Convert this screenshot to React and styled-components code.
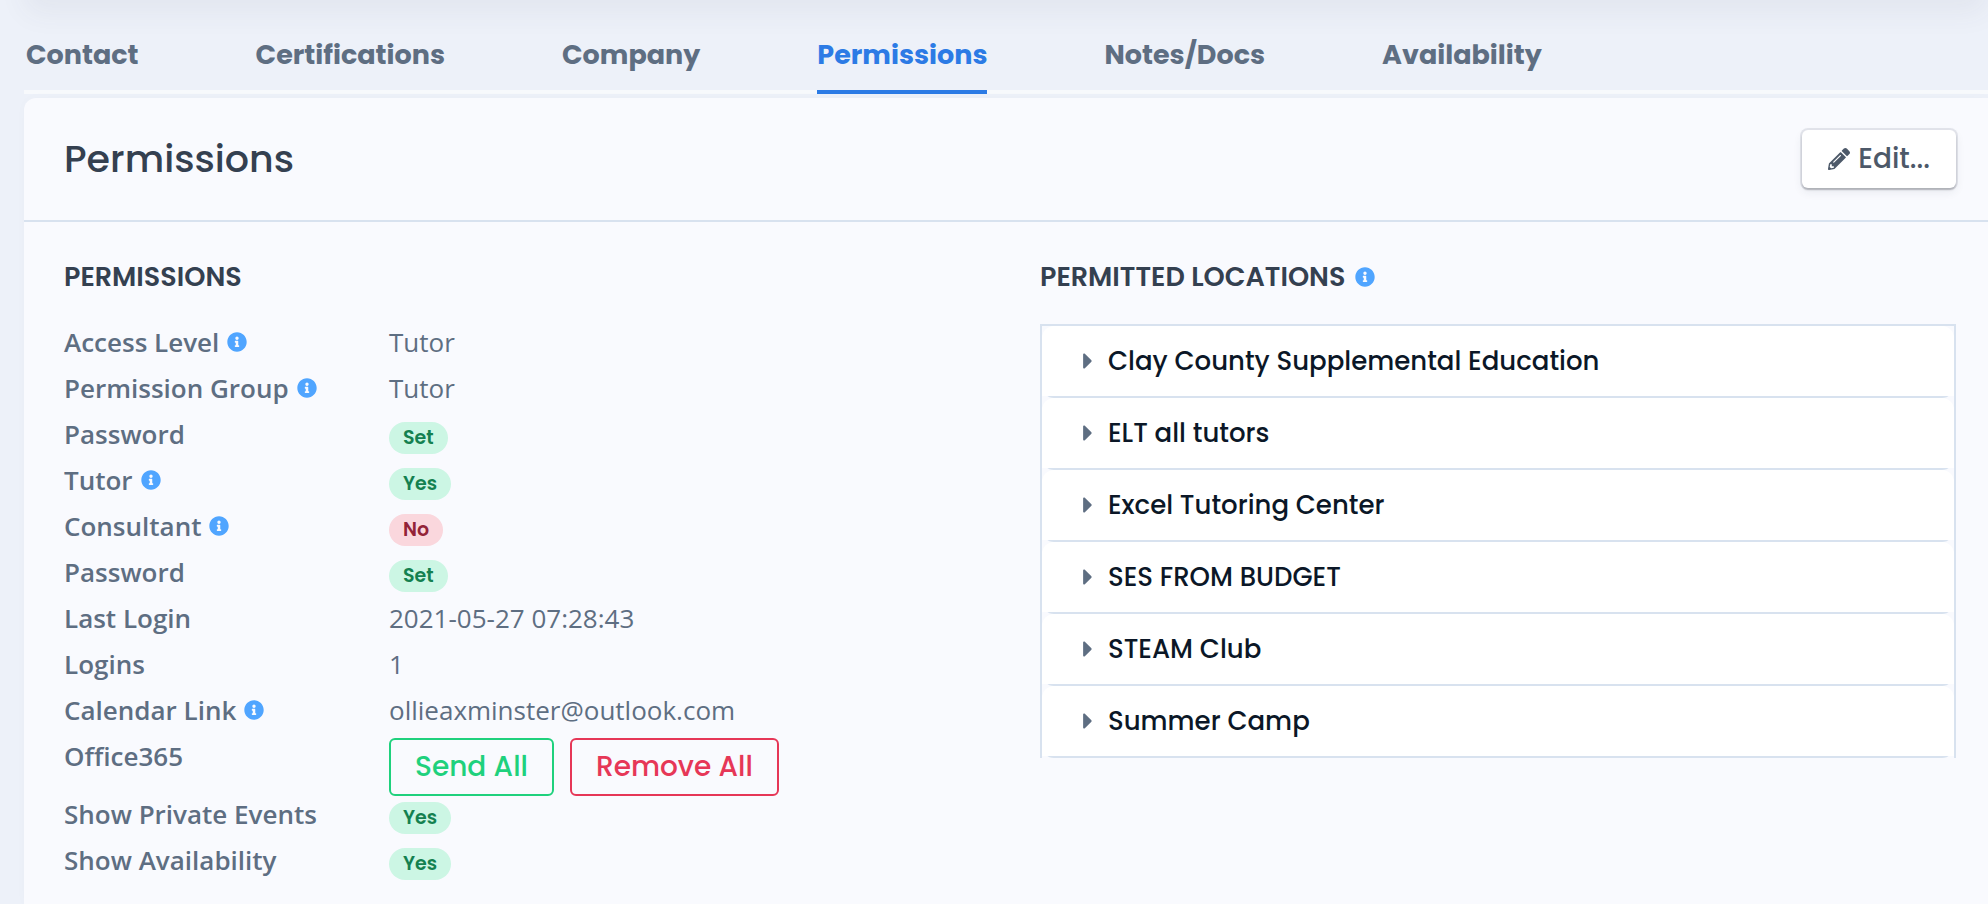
import React,{useState} from 'react'
import styled,{createGlobalStyle} from 'styled-components'
import {FaInfoCircle,FaCaretRight,FaPencilAlt} from 'react-icons/fa'

const GlobalStyle = createGlobalStyle`
  * { box-sizing: border-box; }
  body {
    margin: 0;
    background: #edf1f9;
    color: #5e6e82;
    font-family: "Open Sans", sans-serif;
    font-size: 26px;
    line-height: 36px;
    overflow: hidden;
  }
`

const heading = 'Poppins, Inter, sans-serif'

const Page = styled.div`
  min-height: 100vh;
  padding-left: 24px;
  display: flex;
  flex-direction: column;
`

// bottom edge of the profile card that sits above the tabs
const CardAbove = styled.div`
  height: 60px;
  margin-top: -60px;
  border-radius: 12px;
  box-shadow: 0 14px 28px rgba(65, 69, 88, 0.06);
`

const Tabs = styled.nav`
  display: flex;
  gap: 117px;
  height: 94px;
  padding-left: 2px;
  border-bottom: 4px solid #f7f9fc;
`

const Tab = styled.a`
  height: 94px;
  padding-top: 37px;
  border-bottom: 4px solid ${props => props.$active ? '#2c7be5' : 'transparent'};
  color: ${props => props.$active ? '#2c7be5' : '#5e6e82'};
  font-family: ${heading};
  font-size: 27px;
  font-weight: 700;
  text-decoration: none;
  white-space: nowrap;
`

const Card = styled.section`
  flex: 1;
  margin-top: 4px;
  background: #f9fafe;
  border-radius: 12px 0 0 0;
  box-shadow: 0 0 12px rgba(0, 30, 20, 0.02);
`

const CardHeader = styled.header`
  display: flex;
  align-items: center;
  justify-content: space-between;
  height: 124px;
  padding: 0 32px 0 40px;
  border-bottom: 2px solid #d8e2ef;
`

const Title = styled.h1`
  margin: 0;
  color: #344050;
  font-family: ${heading};
  font-size: 38px;
  line-height: 48px;
  font-weight: 500;
`

const EditButton = styled.button`
  display: flex;
  align-items: center;
  gap: 8px;
  height: 58px;
  padding: 0 26px;
  border: 0;
  border-radius: 6px;
  background: #fff;
  color: #4d5969;
  font-family: ${heading};
  font-size: 28px;
  font-weight: 500;
  cursor: pointer;
  box-shadow: 0 0 0 2px rgba(43, 45, 80, 0.1), 0 4px 10px rgba(43, 45, 80, 0.08), 0 2px 2px rgba(0, 0, 0, 0.2);

  svg {
    font-size: 22px;
  }
`

const CardBody = styled.div`
  display: grid;
  grid-template-columns: 1fr 1fr;
  column-gap: 60px;
  padding: 37px 32px 0 40px;
`

const Subtitle = styled.h2`
  display: flex;
  align-items: center;
  gap: 10px;
  margin: 0 0 29px;
  color: #344050;
  font-family: ${heading};
  font-size: 27px;
  line-height: 36px;
  font-weight: 600;
  text-transform: uppercase;
`

const InfoIcon = styled(FaInfoCircle)`
  color: #50a5ff;
  font-size: 20px;
  flex: none;
`

const Fields = styled.dl`
  margin: 0;
`

const Field = styled.div`
  display: grid;
  grid-template-columns: 325px 1fr;
  min-height: 46px;
`

const FieldName = styled.dt`
  display: flex;
  align-items: center;
  align-self: start;
  gap: 8px;
  font-weight: 600;
`

const FieldValue = styled.dd`
  display: flex;
  align-items: flex-start;
  gap: 16px;
  margin: 0;
`

const Badge = styled.span`
  margin-top: 6px;
  padding: 0 14px;
  border-radius: 16px;
  background: ${props => props.$danger ? '#fad7dd' : '#ccf6e4'};
  color: ${props => props.$danger ? '#932338' : '#148150'};
  font-family: ${heading};
  font-size: 19px;
  line-height: 32px;
  font-weight: 600;
`

const OutlineButton = styled.button`
  height: 58px;
  padding: 0 24px;
  border: 2px solid;
  border-radius: 6px;
  background: transparent;
  color: ${props => props.$danger ? '#e63757' : '#1fd17d'};
  font-family: ${heading};
  font-size: 28px;
  font-weight: 500;
  cursor: pointer;
`

const Locations = styled.div`
  border: 2px solid #d8e2ef;
  border-bottom: 0;
`

const Location = styled.div`
  border-bottom: 2px solid #d8e2ef;
  border-radius: 12px;
`

const LocationButton = styled.button`
  display: flex;
  align-items: center;
  gap: 14px;
  width: 100%;
  height: 70px;
  padding: 0 40px;
  border: 0;
  border-radius: 12px 12px 0 0;
  background: #fff;
  color: #0b1727;
  font-family: ${heading};
  font-size: 26px;
  font-weight: 500;
  text-align: left;
  cursor: pointer;

  svg {
    width: 12px;
    height: 26px;
    color: #5e6e82;
    transform: ${props => props.$open ? 'rotate(90deg)' : 'none'};
  }
`

const tabs = ['Contact','Certifications','Company','Permissions','Notes/Docs','Availability']

const fields = [
    {name:'Access Level',info:true,value:'Tutor'},
    {name:'Permission Group',info:true,value:'Tutor'},
    {name:'Password',badge:'Set'},
    {name:'Tutor',info:true,badge:'Yes'},
    {name:'Consultant',info:true,badge:'No'},
    {name:'Password',badge:'Set'},
    {name:'Last Login',value:'2021-05-27 07:28:43'},
    {name:'Logins',value:'1'},
    {name:'Calendar Link',info:true,value:'ollieaxminster@outlook.com'},
    {name:'Office365',sync:true},
    {name:'Show Private Events',badge:'Yes'},
    {name:'Show Availability',badge:'Yes'},
]

const locations = [
    'Clay County Supplemental Education',
    'ELT all tutors',
    'Excel Tutoring Center',
    'SES FROM BUDGET',
    'STEAM Club',
    'Summer Camp',
]

const App = () =>{
    const [tab,setTab] = useState('Permissions')
    const [open,setOpen] = useState("")

    return(
        <Page>
            <GlobalStyle />
            <CardAbove />
            <Tabs>
                {
                    tabs.map(item=>(
                        <Tab key={item} href="#" $active={item===tab}
                        onClick={(e)=>{
                            e.preventDefault()
                            setTab(item)
                        }}>{item}</Tab>
                    ))
                }
            </Tabs>
            <Card>
                <CardHeader>
                    <Title>Permissions</Title>
                    <EditButton type="button"><FaPencilAlt />Edit...</EditButton>
                </CardHeader>
                <CardBody>
                    <div>
                        <Subtitle>Permissions</Subtitle>
                        <Fields>
                            {
                                fields.map((item,i)=>(
                                    <Field key={i}>
                                        <FieldName>{item.name}{item.info && <InfoIcon />}</FieldName>
                                        <FieldValue>
                                            {item.value}
                                            {item.badge && <Badge $danger={item.badge==='No'}>{item.badge}</Badge>}
                                            {item.sync && <>
                                                <OutlineButton type="button">Send All</OutlineButton>
                                                <OutlineButton type="button" $danger>Remove All</OutlineButton>
                                            </>}
                                        </FieldValue>
                                    </Field>
                                ))
                            }
                        </Fields>
                    </div>
                    <div>
                        <Subtitle>Permitted Locations<InfoIcon /></Subtitle>
                        <Locations>
                            {
                                locations.map(item=>(
                                    <Location key={item}>
                                        <LocationButton type="button" $open={open===item} aria-expanded={open===item}
                                        onClick={()=>setOpen(open===item ? "" : item)}>
                                            <FaCaretRight viewBox="0 0 192 512" />{item}
                                        </LocationButton>
                                    </Location>
                                ))
                            }
                        </Locations>
                    </div>
                </CardBody>
            </Card>
        </Page>
    )}


export default App
